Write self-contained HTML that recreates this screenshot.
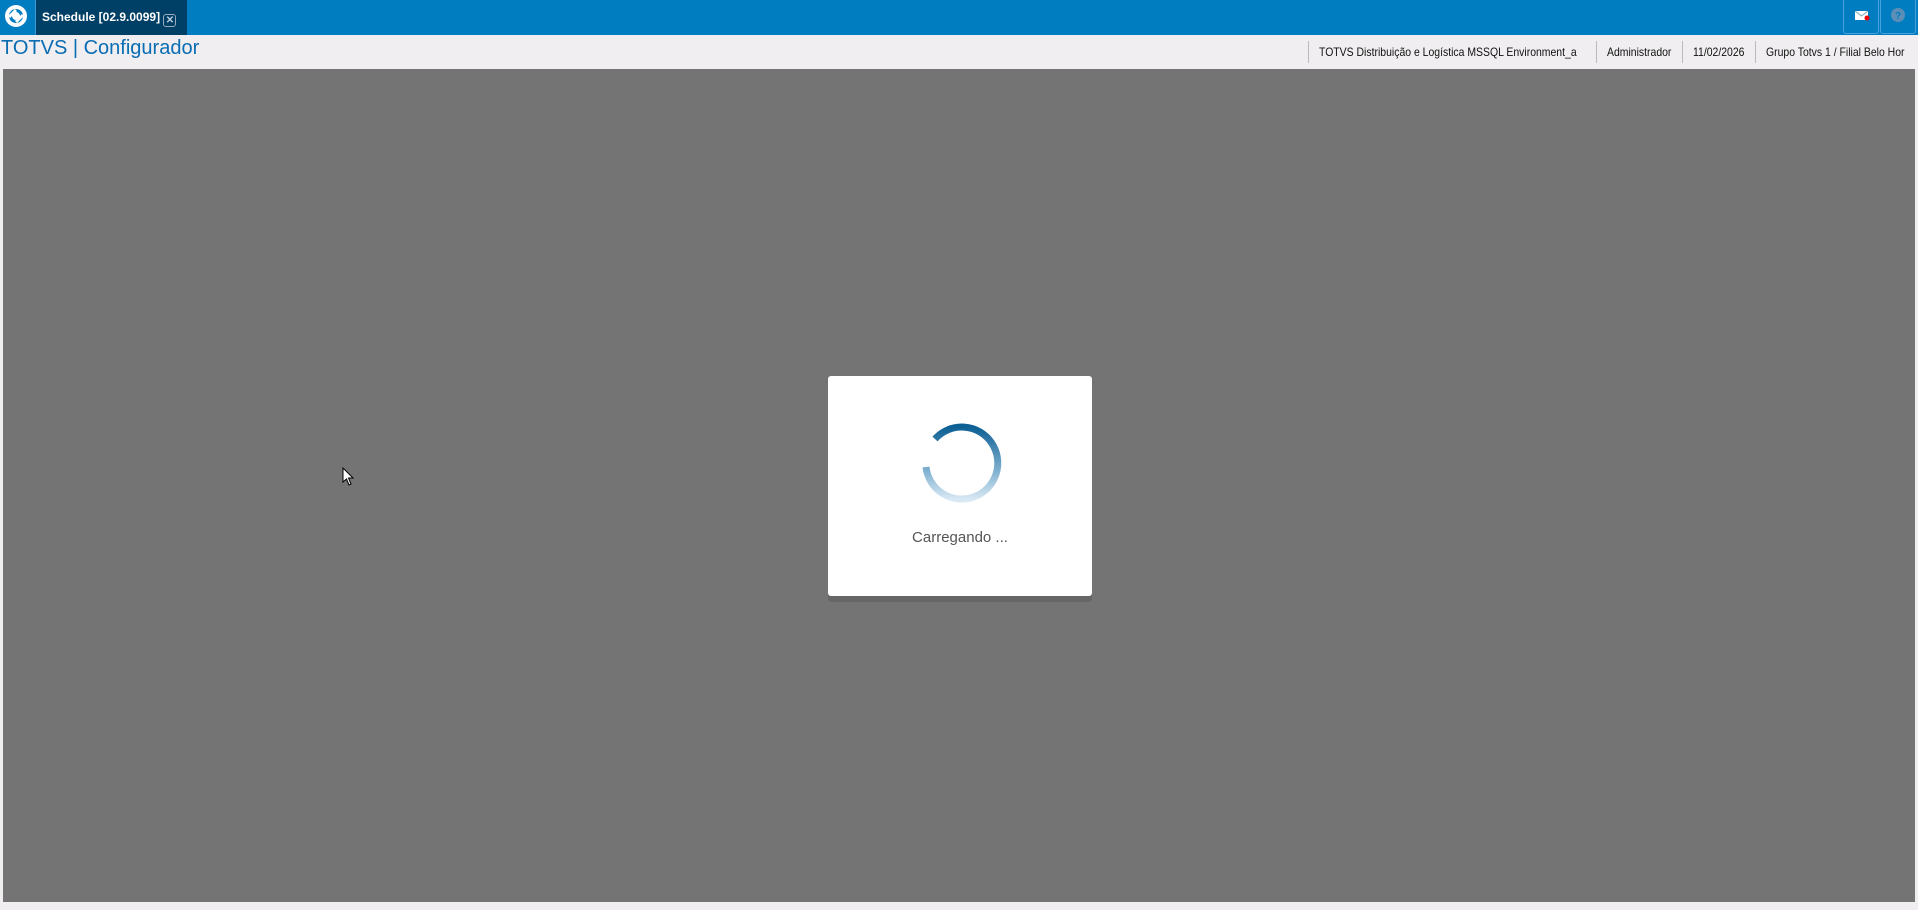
<!DOCTYPE html>
<html><head><meta charset="utf-8"><style>
*{margin:0;padding:0;box-sizing:border-box}
body{width:1918px;height:910px;background:#f0eef0;font-family:"Liberation Sans",sans-serif;position:relative;overflow:hidden}
.top{position:absolute;left:0;top:0;width:1918px;height:35px;background:#007cc0}
.logo{position:absolute;left:0;top:0;width:36px;height:35px;border-right:1px solid #3a9ad6}
.tab{position:absolute;left:36px;top:0;width:151px;height:35px;background:#003f66;color:#fff;font-size:12px;font-weight:bold;line-height:34px;padding-left:6px;white-space:nowrap}
.ic{position:absolute;top:0;width:36px;height:34px;border:1px solid #4aa0dc;border-top:none;border-radius:0 0 3px 3px}
.title{position:absolute;left:1px;top:37px;font-size:20px;color:#0a6db3}
.info{position:absolute;top:41px;height:22px;font-size:12px;color:#111;line-height:22px;border-left:1px solid #bbb;padding-left:10px;white-space:nowrap}
.info span{display:inline-block;transform:scaleX(0.87);transform-origin:left}
.gray{position:absolute;left:3px;top:69px;width:1912px;height:833px;background:#747474}
.dlg{position:absolute;left:828px;top:376px;width:264px;height:220px;background:#fff;border-radius:3px;box-shadow:0 6px 0 #666}
.txt{position:absolute;left:0;width:264px;top:153px;text-align:center;font-size:15px;color:#555}
</style></head><body>
<div class="top">
<div class="logo"><svg width="36" height="35"><circle cx="16" cy="16" r="11" fill="#fff"/><circle cx="16" cy="16" r="5.5" fill="none" stroke="#007cc0" stroke-width="3"/><path d="M9 17 L16 10 M16 22 L23 15" stroke="#fff" stroke-width="3"/></svg></div>
<div class="tab">Schedule [02.9.0099] <span style="display:inline-block;width:13px;height:13px;border:1px solid #9ab;border-radius:3px;font-size:10px;line-height:11px;text-align:center;color:#bcd;vertical-align:-2px">✕</span></div>
<div class="ic" style="left:1843px"><svg width="36" height="34"><rect x="11" y="11" width="13" height="9" fill="#fff"/><path d="M11 11 L17.5 16 L24 11" stroke="#7ab" fill="none"/><circle cx="23" cy="18" r="2.5" fill="#e00"/></svg></div>
<div class="ic" style="left:1880px"><svg width="36" height="34"><circle cx="17" cy="15" r="7" fill="#5b8fb8"/><text x="17" y="19" font-size="10" font-weight="bold" fill="#007cc0" text-anchor="middle" font-family="Liberation Sans">?</text></svg></div>
</div>
<div class="title">TOTVS | Configurador</div>
<div class="info" style="left:1308px"><span>TOTVS Distribuição e Logística MSSQL Environment_a</span></div>
<div class="info" style="left:1596px"><span>Administrador</span></div>
<div class="info" style="left:1682px"><span>11/02/2026</span></div>
<div class="info" style="left:1755px"><span>Grupo Totvs 1 / Filial Belo Hor</span></div>
<div class="gray"></div>
<div class="dlg">
<svg width="264" height="150" style="position:absolute;left:0;top:0">
<defs><linearGradient id="g" x1="0" y1="0" x2="0" y2="1"><stop offset="0" stop-color="#0d5f94"/><stop offset="0.6" stop-color="#7fb0d0"/><stop offset="1" stop-color="#d8e8f4"/></linearGradient></defs>
<path d="M107 63 A36 36 0 1 1 98 91" fill="none" stroke="url(#g)" stroke-width="7"/>
</svg>
<div class="txt">Carregando ...</div>
</div>
<svg style="position:absolute;left:342px;top:467px" width="14" height="20"><path d="M1 1 L1 15 L4.5 12 L7 18 L9 17 L6.5 11 L11 11 Z" fill="#fff" stroke="#000"/></svg>
</body></html>
